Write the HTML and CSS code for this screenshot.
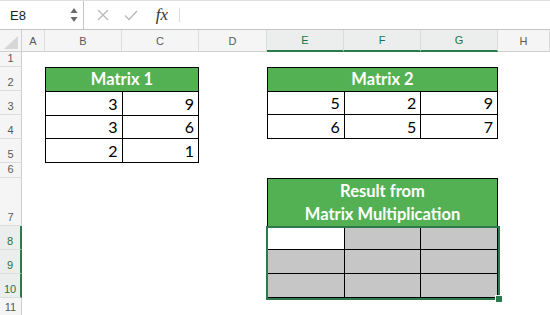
FILE: index.html
```html
<!DOCTYPE html>
<html lang="en">
<head>
  <meta charset="UTF-8">
  <title>Matrix Multiplication</title>
  <link rel="stylesheet" href="styles.css">
</head>
<body>

  <!-- formula bar -->
  <div class="formula-bar">
    <div class="name-box">
      <span>E8</span>
      <svg class="spin" width="8" height="16" viewBox="0 0 8 16">
        <path d="M4 1 L7.5 6 L0.5 6 Z" fill="#6b6b6b"/>
        <path d="M4 15 L7.5 10 L0.5 10 Z" fill="#6b6b6b"/>
      </svg>
    </div>
    <div class="tools">
      <span class="tool">
        <svg width="12" height="12" viewBox="0 0 12 12">
          <path d="M1 1 L11 11 M11 1 L1 11" stroke="#b8b8b8" stroke-width="1.3" fill="none"/>
        </svg>
      </span>
      <span class="tool">
        <svg width="14" height="11" viewBox="0 0 14 11">
          <path d="M1 5.5 L5 9.5 L13 1" stroke="#b8b8b8" stroke-width="1.3" fill="none"/>
        </svg>
      </span>
      <span class="tool fx">fx</span>
    </div>
    <div class="formula-input"></div>
  </div>

  <!-- sheet -->
  <div class="sheet">
    <div class="corner"></div>
    <div class="col-head">A</div>
    <div class="col-head">B</div>
    <div class="col-head">C</div>
    <div class="col-head">D</div>
    <div class="col-head sel">E</div>
    <div class="col-head sel">F</div>
    <div class="col-head sel">G</div>
    <div class="col-head">H</div>

    <div class="row-head">1</div>
    <div class="row-head">2</div>
    <div class="row-head">3</div>
    <div class="row-head">4</div>
    <div class="row-head">5</div>
    <div class="row-head">6</div>
    <div class="row-head">7</div>
    <div class="row-head sel">8</div>
    <div class="row-head sel">9</div>
    <div class="row-head sel">10</div>
    <div class="row-head last">11</div>

    <div class="block m1">
      <div class="title">Matrix 1</div>
      <div>3</div><div>9</div>
      <div>3</div><div>6</div>
      <div>2</div><div>1</div>
    </div>

    <div class="block m2">
      <div class="title">Matrix 2</div>
      <div>5</div><div>2</div><div>9</div>
      <div>6</div><div>5</div><div>7</div>
    </div>

    <div class="block result">
      <div class="title"><span>Result from<br>Matrix Multiplication</span></div>
      <div class="active"></div><div class="empty"></div><div class="empty"></div>
      <div class="empty"></div><div class="empty"></div><div class="empty"></div>
      <div class="empty"></div><div class="empty"></div><div class="empty"></div>
      <div class="selection"></div>
    </div>
  </div>

</body>
</html>
```

FILE: styles.css
```css
body {
  margin: 0;
  width: 550px;
  height: 315px;
  overflow: hidden;
  background: #fff;
  font-family: "Liberation Sans", Arial, sans-serif;
}

/* formula bar */
.formula-bar {
  display: flex;
  height: 28px;
  border-top: 1px solid #dedede;
  border-bottom: 1px solid #c4c4c4;
  background: #fff;
}

.name-box {
  width: 84px;
  box-sizing: border-box;
  display: flex;
  align-items: center;
  justify-content: space-between;
  padding: 0 5px 0 10px;
  border-right: 1px solid #c6c6c6;
  font-size: 13px;
  color: #222;
}

.tools {
  display: flex;
  align-items: center;
  padding-left: 5px;
}

.tool {
  width: 28px;
  display: flex;
  justify-content: center;
}

.tool.fx {
  width: 34px;
  font-family: "Liberation Serif", serif;
  font-style: italic;
  font-size: 17px;
  color: #333;
}

.formula-input {
  flex: 1;
  margin: 7px 0;
  border-left: 1px solid #dcdcdc;
}

/* sheet grid */
.sheet {
  display: grid;
  grid-template-columns: 22px 23px 77px 77px 68px 77px 77px 77px 1fr;
  grid-template-rows: 22px 15px repeat(4, 24px) 15px 48px repeat(3, 24px) 1fr;
  height: 285px;
}

.corner,
.col-head,
.row-head {
  box-sizing: border-box;
  background: #f5f5f5;
  font-size: 11px;
  color: #5a5a5a;
}

.corner {
  display: flex;
  justify-content: flex-end;
  align-items: flex-end;
  padding: 0 3px 2px 0;
  border-right: 1px solid #cfcfcf;
  border-bottom: 1px solid #cfcfcf;
}

.corner::after {
  content: "";
  width: 0;
  height: 0;
  border-left: 14px solid transparent;
  border-bottom: 13px solid #d7d7d7;
}

.col-head {
  display: flex;
  align-items: center;
  justify-content: center;
  border-right: 1px solid #dcdcdc;
  border-bottom: 1px solid #cfcfcf;
}

.col-head.sel {
  background: #eceeed;
  color: #217346;
  border-bottom: 2px solid #2b7a4b;
}

.row-head {
  grid-column: 1;
  display: flex;
  align-items: flex-end;
  justify-content: center;
  padding-bottom: 2px;
  border-right: 1px solid #cfcfcf;
  border-bottom: 1px solid #dcdcdc;
  line-height: 12px;
}

.row-head.sel {
  background: #eceeed;
  color: #217346;
  border-right: 2px solid #2b7a4b;
}

.row-head.last {
  border-bottom: none;
}

/* matrices */
.block {
  display: grid;
  border-top: 1px solid #000;
  border-left: 1px solid #000;
  font-family: Lato, "Liberation Sans", sans-serif;
  font-size: 16px;
  color: #000;
}

.block > div {
  display: flex;
  align-items: flex-end;
  justify-content: flex-end;
  padding: 0 4px 2px 0;
  border-right: 1px solid #000;
  border-bottom: 1px solid #000;
}

.block > .title {
  grid-column: 1 / -1;
  justify-content: center;
  padding: 0 0 2px 0;
  background: #53b153;
  color: #fff;
  font-size: 16.5px;
  font-weight: bold;
}

.m1 {
  grid-column: 3 / 5;
  grid-row: 3 / 7;
  grid-template-columns: 1fr 1fr;
  grid-template-rows: repeat(4, 1fr);
}

.m2 {
  grid-column: 6 / 9;
  grid-row: 3 / 6;
  grid-template-columns: repeat(3, 1fr);
  grid-template-rows: repeat(3, 1fr);
}

.result {
  grid-column: 6 / 9;
  grid-row: 8 / 12;
  grid-template-columns: repeat(3, 1fr);
  grid-template-rows: 2fr 1fr 1fr 1fr;
  position: relative;
}

.block > .title span {
  text-align: center;
  line-height: 23px;
}

.result > .title {
  padding-bottom: 0;
}

.result .empty {
  background: #c6c6c6;
}

.result .active {
  background: #fff;
}

.block > .selection {
  position: absolute;
  left: -2px;
  right: -2px;
  top: 47px;
  bottom: -2px;
  padding: 0;
  border: 2px solid #2b7a4b;
  pointer-events: none;
}

.selection::after {
  content: "";
  position: absolute;
  right: -5px;
  bottom: -5px;
  width: 6px;
  height: 6px;
  background: #2b7a4b;
  border: 1px solid #fff;
}
```
